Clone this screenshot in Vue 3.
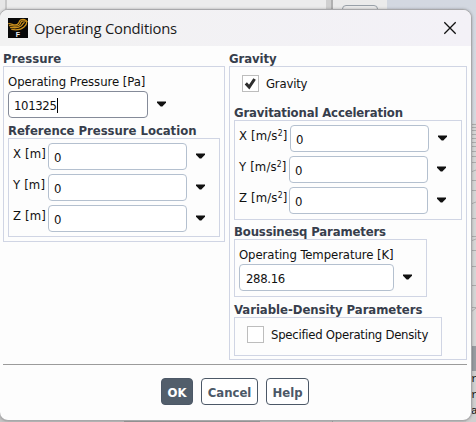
<script setup>
import { ref } from 'vue'

const pressure = ref('101325')
const temperature = ref('288.16')
const location = ref([
  { axis: 'X', value: '0' },
  { axis: 'Y', value: '0' },
  { axis: 'Z', value: '0' },
])
const acceleration = ref([
  { axis: 'X', value: '0' },
  { axis: 'Y', value: '0' },
  { axis: 'Z', value: '0' },
])
const output = ['r', 'r', 'a']
</script>

<template>
  <div class="desktop">
    <div class="bg bg-left"></div>
    <div class="bg bg-mid"></div>
    <div class="bg bg-tab"></div>
    <div class="bg bg-right"></div>
    <svg class="bg bg-mesh" width="10" height="224" viewBox="0 0 10 224">
      <rect width="10" height="224" fill="#d6d6d6" />
      <path d="M0 1.5H10M0 4.5H10M0 7.5H10M0 11.5H10M0 15.5H10M0 19.5H10M0 23.5H10M0 28.5H10M0 33.5H10M0 39.5H10M5 49L10 47M0 57.5H10M0 67.5H10M5 81L10 79M0 95.5H10M0 113.5H10M5 118L10 116M0 127.5H10M0 143.5H10M0 162.5H10M0 184.5H10M5 189L10 185" stroke="#adadad" fill="none" />
    </svg>
    <div class="bg bg-bar"></div>
    <div class="bg bg-console"><span v-for="(c, i) in output" :key="i">{{ c }}</span></div>
    <div class="bg bg-bottom"></div>

    <section class="dialog">
      <header class="titlebar">
        <svg class="logo" width="20" height="20" viewBox="0 0 20 20">
          <rect width="20" height="20" fill="#080808" />
          <g fill="none" stroke="#c98f1c" stroke-width="1.3" stroke-linecap="round">
            <path d="M.8 5.6C4 5.4 6 8 9.3 6.4C12 5 10.5 2.8 12.8 1.8C15 .9 18.3 1.4 18.8 3.5" />
            <path d="M1.5 7.6C5 7.4 7 9.4 11 7.2C13.5 5.6 12 4 14 3.2C15.6 2.6 17.4 2.9 18.8 3.5" />
            <path d="M2.5 9.6C6 9.6 9 10.6 12.7 8.3C15 6.6 14.4 5.2 16.2 4.6" />
            <path d="M3.8 11.4C9 12.3 13.4 11.4 16 9C18 7.2 19 6 18.8 3.5" />
          </g>
          <text x="7.7" y="19.3" class="logo-letter">F</text>
        </svg>
        <h1>Operating Conditions</h1>
        <svg class="close" width="14" height="14" viewBox="0 0 14 14">
          <path d="M1.3 1.3L12.7 12.7M12.7 1.3L1.3 12.7" fill="none" stroke="#111" stroke-width="1.3" />
        </svg>
      </header>

      <main class="columns">
        <div class="column left">
          <h2 class="w-pressure">Pressure</h2>
          <div class="box outer">
            <label class="caption">Operating Pressure [Pa]</label>
            <div class="field">
              <div class="input focused">{{ pressure }}<i class="caret"></i></div>
              <svg class="arrow" width="9" height="6" viewBox="0 0 9 6"><path d="M0 .5H9V1.7L5.3 5.4H3.7L0 1.7Z" /></svg>
            </div>
            <h2 class="w-location">Reference Pressure Location</h2>
            <div class="box vectors">
              <div v-for="row in location" :key="row.axis" class="field">
                <label class="axis">{{ row.axis }} [m]</label>
                <div class="input">{{ row.value }}</div>
                <svg class="arrow" width="9" height="6" viewBox="0 0 9 6"><path d="M0 .5H9V1.7L5.3 5.4H3.7L0 1.7Z" /></svg>
              </div>
            </div>
          </div>
        </div>

        <div class="column right">
          <h2 class="w-gravity">Gravity</h2>
          <div class="box outer">
            <div class="check gravity">
              <span class="checkbox">
                <svg width="17" height="17" viewBox="0 0 17 17"><path d="M3.8 8.4L7.2 12L12.6 4" fill="none" stroke="#2d2d2d" stroke-width="3" /></svg>
              </span>
              <label>Gravity</label>
            </div>
            <h2 class="w-accel">Gravitational Acceleration</h2>
            <div class="box vectors">
              <div v-for="row in acceleration" :key="row.axis" class="field" :class="{ first: row.axis === 'X' }">
                <label class="axis">{{ row.axis }} [m/s<sup>2</sup>]</label>
                <div class="input">{{ row.value }}</div>
                <svg class="arrow" width="9" height="6" viewBox="0 0 9 6"><path d="M0 .5H9V1.7L5.3 5.4H3.7L0 1.7Z" /></svg>
              </div>
            </div>
            <h2 class="w-bouss">Boussinesq Parameters</h2>
            <div class="box temperature">
              <label class="caption">Operating Temperature [K]</label>
              <div class="field">
                <div class="input">{{ temperature }}</div>
                <svg class="arrow" width="9" height="6" viewBox="0 0 9 6"><path d="M0 .5H9V1.7L5.3 5.4H3.7L0 1.7Z" /></svg>
              </div>
            </div>
            <h2 class="w-density">Variable-Density Parameters</h2>
            <div class="box density">
              <div class="check">
                <span class="checkbox"></span>
                <label class="w-specified">Specified Operating Density</label>
              </div>
            </div>
          </div>
        </div>
      </main>

      <footer class="actions">
        <button class="ok">OK</button>
        <button class="cancel">Cancel</button>
        <button class="help">Help</button>
      </footer>
    </section>
  </div>
</template>

<style>
body {
  margin: 0;
  overflow: hidden;
}
</style>

<style scoped>
.desktop {
  position: relative;
  box-sizing: border-box;
  width: 476px;
  height: 422px;
  padding-top: 9px;
  overflow: hidden;
  background: #d2d3d5;
  font-family: "DejaVu Sans Condensed", "DejaVu Sans", sans-serif;
  font-stretch: condensed;
  font-size: 13px;
  color: #111;
}
.desktop * { box-sizing: border-box; }
.bg { position: absolute; }
.bg-left { left: 0; top: 0; width: 326px; height: 30px; background: linear-gradient(90deg, #e6e6e6 5px, #c8c8c8 5px, #c8c8c8 7px, #ececec 7px); }
.bg-mid { left: 326px; top: 0; width: 61px; height: 30px; background: linear-gradient(90deg, #d0d0d0 5px, #b0b0b0 5px, #b0b0b0 7px, #ebebeb 7px); }
.bg-tab { left: 342px; top: 5px; width: 36px; height: 14px; border: 1px solid #98a0a8; border-radius: 4px; }
.bg-right { left: 387px; top: 0; width: 89px; height: 124px; background: linear-gradient(#d3d8e1, #d6d9df); }
.bg-mesh { left: 466px; top: 123px; }
.bg-bar { left: 466px; top: 346px; width: 10px; height: 27px; background: #989ca1; }
.bg-console {
  left: 466px; top: 371px; width: 10px; height: 51px; padding-left: 6px; background: #d0d0d0;
  font: 11px/16px "Liberation Mono", monospace;
}
.bg-console span { display: block; width: 4px; text-indent: -1px; }
.bg-bar { z-index: 0; height: 27px; }
.bg-bottom { left: 0; top: 410px; width: 466px; height: 12px; background: linear-gradient(90deg, #c5c5c5 124px, #a0a0a0 124px, #a5a5a5 260px, #c6c6c6 260px, #c6c6c6 332px, #a8a8a8 332px, #a8a8a8 333px, #cacaca 333px); }

.dialog {
  position: relative;
  width: 473px;
  height: 412px;
  margin-left: -1px;
  border: 1px solid #a8a8aa;
  border-radius: 9px;
  background: #fdfdfd;
  overflow: hidden;
  box-shadow: 0 0 3px rgba(0, 0, 0, 0.28);
}
.titlebar {
  display: flex;
  align-items: center;
  height: 36px;
  padding: 0 14px 1px 8px;
  background: linear-gradient(90deg, #f2f2f2, #f3f1f7);
}
.logo-letter { font: bold 7px "Liberation Sans", sans-serif; fill: #eee; }
h1 {
  margin: 0 auto 0 6px;
  font: 400 14.8px/24px "Open Sans", sans-serif;
  letter-spacing: -0.22px;
  color: #1b1b1b;
  white-space: nowrap;
}
.columns {
  display: flex;
  align-items: flex-start;
  gap: 4px;
  height: 319px;
  margin: 0 4px 0 3px;
  padding-top: 4px;
  border-bottom: 1px solid #9b9b9b;
}
.left { width: 222px; }
.right { width: 238px; }
h2 {
  height: 16px;
  margin: 0;
  font-size: 13px;
  font-weight: 700;
  line-height: 18px;
  color: #373e4c;
  white-space: nowrap;
}
.w-location, .w-density { letter-spacing: -0.04px; }
.w-gravity { letter-spacing: -0.1px; }
.w-accel, .w-bouss { letter-spacing: -0.15px; }
.box { border: 1px solid #d0d5e4; }
.outer { padding: 0 4px 4px; }
label {
  white-space: nowrap;
  line-height: 16px;
  letter-spacing: -0.2px;
}
.caption { display: block; letter-spacing: -0.05px; }
.field { display: flex; align-items: center; height: 27px; }
.input {
  display: flex;
  align-items: center;
  flex: none;
  width: 139px;
  height: 27px;
  padding: 2px 0 0 5px;
  border: 1px solid #b4c0cf;
  border-radius: 4px;
  background: #fff;
  letter-spacing: -0.35px;
}
.focused { width: 140px; border-color: #858b99; }
.caret { width: 1px; height: 15px; background: #000; }
.arrow { margin: -2px 0 0 9px; fill: #111; }
.left .outer { height: 176px; }
.left .caption { margin-top: 7px; margin-bottom: 1px; }
.left h2.w-location { margin-top: 4px; }
.left .vectors { width: 212px; height: 99px; }
.vectors { display: flex; flex-direction: column; gap: 4px; padding: 4px 0 0 4px; }
.axis { flex: none; align-self: flex-start; margin-top: 3px; }
.left .axis { width: 35px; letter-spacing: 0.15px; }
.right .outer { height: 294px; }
.right .vectors { width: 228px; height: 100px; }
.right .axis { width: 50px; letter-spacing: 0.15px; }
.right .first .axis { width: 51px; }
sup { font-size: 8.5px; line-height: 0; vertical-align: 4px; }
.check { display: flex; align-items: center; gap: 7px; }
.checkbox { width: 17px; height: 17px; border: 1px solid #bdbdbd; background: #fff; }
.checkbox svg { display: block; margin: -1px; }
.gravity { height: 17px; margin: 8px 0 12px 8px; }
.gravity label { padding-top: 1px; }
.w-specified { letter-spacing: -0.26px; }
.w-bouss { margin-top: 3px; }
.temperature { width: 193px; height: 58px; padding: 7px 0 0 4px; }
.temperature .caption { margin-bottom: 1px; letter-spacing: -0.08px; }
.temperature .input { width: 155px; padding-left: 6px; }
.w-density { margin-top: 4px; }
.density { width: 208px; height: 39px; padding: 8px 0 0 12px; }
.actions { display: flex; gap: 8px; padding: 13px 0 0 161px; }
button {
  height: 27px;
  padding: 2px 0 0;
  border: 1px solid #4c5867;
  border-radius: 4px;
  background: #fff;
  font: inherit;
  font-weight: 700;
  color: #4c5867;
}
.ok { width: 32px; background: #525e6b; color: #fff; }
.cancel { width: 57px; }
.help { width: 43px; }
</style>
